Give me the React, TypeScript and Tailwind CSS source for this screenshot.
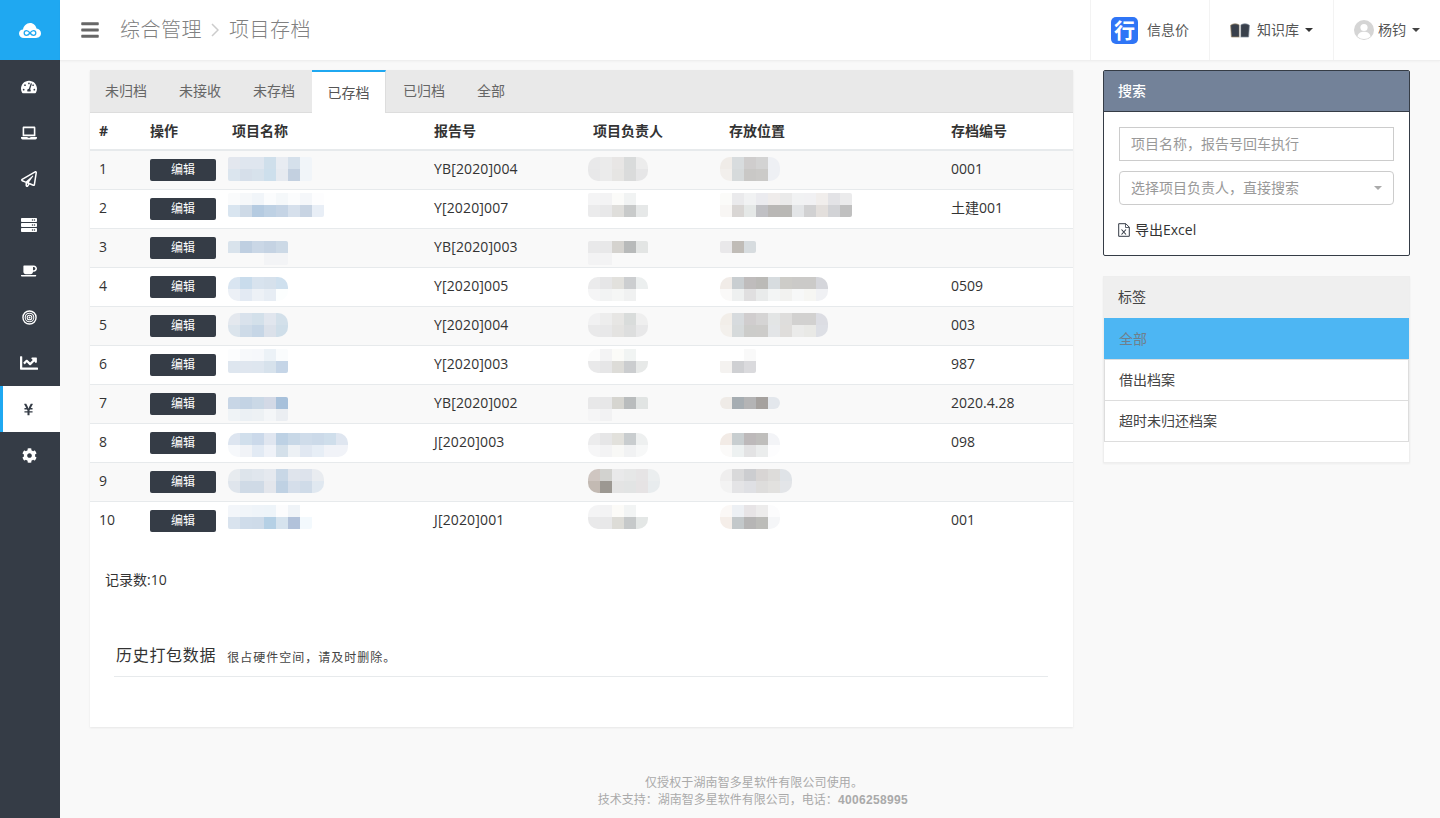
import React from "react";
import {
  FaTachometerAlt,
  FaLaptop,
  FaRegPaperPlane,
  FaServer,
  FaCoffee,
  FaChartLine,
  FaYenSign,
  FaCog,
  FaBars,
} from "react-icons/fa";

const FONT = "font-['Open_Sans','Noto_Sans_CJK_SC',sans-serif]";

type M = string[];

function Mosaic({ rows, top, round, className }: { rows: M; top: number; round: boolean; className: string }) {
  return (
    <div
      className={`w-fit overflow-hidden ${round ? "rounded-[10px]" : "rounded-[2px]"} ${className}`}
      style={{ marginTop: top }}
    >
      {rows.map((r, i) => (
        <div key={i} className="flex">
          {r.split(" ").map((c, j) => (
            <div key={j} className="h-3 w-3" style={{ background: `#${c}` }} />
          ))}
        </div>
      ))}
    </div>
  );
}

const data: { report: string; code: string; name: M; person: M; loc: M; round: string }[] = [
  {
    report: "YB[2020]004",
    code: "0001",
    round: "pl",
    name: ["e3e7ee dfe6ef dfe6ef cfdfeb e8ecf2 d5e0eb f1f5f9", "dbe5ee d6dfea d7e2ec cddfec e6eaf0 c3d0e0 f1f5f9"],
    person: ["e9e9ea ebebeb e8e6e5 d9dbdb ececec", "e8e8e9 ebebeb e6e5e3 dadbdb e6e6e7"],
    loc: ["f0ece8 d8dcde cfcdcd d3d3d3 eef0f4", "f2efec d6dadb c9c8c6 cbcac8 eef0f4"],
  },
  {
    report: "Y[2020]007",
    code: "土建001",
    round: "",
    name: ["fafbfc f6f8fa f1f5f9 fbfcfd f5f8fa fbfcfd f5f7fa fdfdfe", "d9e5f0 cedae7 b5cbe1 bed1e4 c5d4e5 d6e0ec c8d4e3 e8eef6"],
    person: ["f4f4f5 f3f3f4 fbfbf9 f1f3f3 ffffff", "ebebec e8e8e9 dfdedb c8caca e6e8e8"],
    loc: ["fbfbf9 eaeaec f1f2f3 ebebef efeceb eaeaea f1f2f3 f1f1f3 f1eeec e3e3e6 ebebec", "f8f6f4 d9d6d4 e5e8e7 c0c0c4 b9b7b5 b9b8b5 e3e5e7 d1d1d2 e3dfdc d2d3d6 c0c0c0"],
  },
  {
    report: "YB[2020]003",
    code: "",
    round: "",
    name: ["d9e3ec bfcfe1 cad7e6 c5d3e3 ccd9e6", "f9f9f9 f9f9f9 f9f9f9 f3f4f6 f3f4f6"],
    person: ["e9e9ea e8e8e9 d5d3cf b8baba e3e5e4", "f3f3f4 f3f3f4 f9f9f9 f9f9f9 f9f9f9"],
    loc: ["e9e8ea c0bcb7 d7dcdf"],
  },
  {
    report: "Y[2020]005",
    code: "0509",
    round: "npl",
    name: ["d9e5f1 c9dcec d8e3ee d6e1ec cfe0ee", "ecf0f6 e3eaf3 edf1f6 e7edf4 fcfefe"],
    person: ["ebebec e6e6e7 e2e1dd ccced0 ecefef", "f5f5f6 f2f3f3 f5f6f5 f0f1f1 ffffff"],
    loc: ["f1ece8 c9ced1 bfbcbc bbbab7 d7dcdf cdccc8 cbcac8 cbcac8 d5d6db", "faf9f8 eef0f0 e0dfe0 e9ebeb f3f5f5 f2f2f0 f7f8f8 f6f6f3 f0f1f4"],
  },
  {
    report: "Y[2020]004",
    code: "003",
    round: "npl",
    name: ["e4e8ee d9e2ec d3e0ea e1e6ee d3e0ea", "dbe4ec cedbe8 c6d6e6 dbe1ea cfdee9"],
    person: ["f1f1f2 ededed e7e6e4 d9dcdb efefef", "e9e9ea e8e8e9 e4e3e1 dddede e8e8e9"],
    loc: ["f2eee9 d7dbde d0cdce d5d4d4 e3e5e5 dedddc d2d1d0 d2d1d0 dcdde3", "f3f0ec d6dadb ccccca cdccca e3e5e7 dfdddb ebebea e9e9e6 dddfe5"],
  },
  {
    report: "Y[2020]003",
    code: "987",
    round: "p",
    name: ["fcfdfe f7f9fb f6f8fb ecf2f7 fafcfd", "dee6ef dfe6ef dee6ef d7e2ec c5d5e7"],
    person: ["fcfcfc f3f3f4 fbfbf8 f1f4f3 ffffff", "e9e9ea e6e6e7 dddcd8 cbcdcf e7e9e8"],
    loc: ["ffffff ffffff f9f9f9", "f4f2f0 cfd0d3 dadadd"],
  },
  {
    report: "YB[2020]002",
    code: "2020.4.28",
    round: "l",
    name: ["c8d6e6 c3d3e4 cad8e6 d3d9e6 a8c1db", "eff3f6 ebf0f4 edf1f4 f4f6f8 ebeef2"],
    person: ["e8e8e9 e7e7e8 d6d5d0 b9bcbd e1e4e3", "f5f5f6 f2f2f3 f9f9f9 f9f9f9 f9f9f9"],
    loc: ["efebe7 a6adb2 b4b4b5 a5a19e e3e7ec"],
  },
  {
    report: "J[2020]003",
    code: "098",
    round: "npl",
    name: ["dde5f0 d1dfec cbd9ea e0e6f0 bdd1e4 c8d8e7 cfdcea ccdae9 cfdeeb dfe6f0", "f6f8fb f1f3f7 e2eaf4 eff2f8 d4e0ea edf1f5 e1e8f2 e7eef6 f1f3f8 f1f3f8"],
    person: ["ececed e6e6e7 e2e1dc c9cdcf eef0f0", "f6f6f7 f3f3f4 f8f8f6 f1f2f3 f7f8f8"],
    loc: ["f2ebe6 c8ced0 bdb9ba bfbebc f3f4f7", "fbfaf9 edf1f1 e3e3e4 ebeded fdfdfe"],
  },
  {
    report: "",
    code: "",
    round: "npl",
    name: ["e7ebef dde4eb e0e6ed e5e9ef c8d7e6 dfe4ec dde3ec e9ecf0", "dfe5ec cfdae6 cfdae6 e3e6ec bfd1e3 d5deea cfdbe8 e0e8f0"],
    person: ["cfc6c1 d2d2cf e9e9ea e6e7e7 e6e4e5 ebeeef", "c3bab3 9c9892 e4e4e4 e2e4e4 e6e3e4 e8ecee"],
    loc: ["efeeee d9d9da cccdd0 d8d5d4 dddcda dfe3e7", "f3f3f3 e4e4e6 dfe0e4 dedddc e2e1df e3e5e8"],
  },
  {
    report: "J[2020]001",
    code: "001",
    round: "pl",
    name: ["f3f6fa f1f5f9 eff4f9 eef4f9 fcfcfd f0f4f8 ffffff", "d9e3ee cfdcea cedbe9 b5d0e5 d6e3ee b2c2da f3f9fd"],
    person: ["f4f4f5 f3f3f4 fcfbf8 f2f4f4 ffffff", "e9e9ea e8e8e9 dddcd7 c6c9ca e4e7e6"],
    loc: ["fbf8f6 edf0f4 e7e4e6 edecec fcfcfd", "f5eee9 c3c8ca b6b5b5 bcbcb9 f5f6f8"],
  },
];

const offsets = [6, 3, 12, 9, 6, 3, 12, 9, 6, 3];

function Rings({ size }: { size?: number }) {
  return (
    <svg width={size} height={size} viewBox="0 0 16 16" fill="none" stroke="currentColor">
      <circle cx="8" cy="8" r="7" strokeWidth="1.500" />
      <circle cx="8" cy="8" r="4.600" strokeWidth="1.100" />
      <circle cx="8" cy="8" r="2.500" strokeWidth="1.100" />
      <circle cx="8" cy="8" r="0.800" fill="currentColor" strokeWidth="0.500" />
    </svg>
  );
}

const nav: { Icon: React.ComponentType<{ size?: number }>; active?: boolean; size?: number }[] = [
  { Icon: FaTachometerAlt },
  { Icon: FaLaptop },
  { Icon: FaRegPaperPlane },
  { Icon: FaServer },
  { Icon: FaCoffee },
  { Icon: Rings, size: 15 },
  { Icon: FaChartLine, size: 18 },
  { Icon: FaYenSign, active: true, size: 13 },
  { Icon: FaCog, size: 15 },
];

const tabs = ["未归档", "未接收", "未存档", "已存档", "已归档", "全部"];

function Caret({ className = "border-t-[#333]" }: { className?: string }) {
  return <span className={`inline-block h-0 w-0 border-x-4 border-t-4 border-x-transparent ${className}`} />;
}

function Logo() {
  return (
    <svg width="22" height="15" viewBox="0 0 22 15">
      <path
        d="M5 15C2 15 0 13 0 10.500 0 8 2 6.500 4 6.500 4.500 3 7.500 0 11 0c3.500 0 6 2.500 6.500 5.500C20 5.700 22 7.700 22 10.300 22 13 20 15 17 15Z"
        fill="#fff"
      />
      <path
        d="M11 10C9.500 8 8.500 7.700 7.500 7.700a2.300 2.300 0 0 0 0 4.600C8.500 12.300 9.500 12 11 10c1.500-2 2.500-2.300 3.500-2.300a2.300 2.300 0 0 1 0 4.600C13.500 12.300 12.500 12 11 10Z"
        fill="none"
        stroke="#1fa8f1"
        strokeWidth="1.300"
      />
    </svg>
  );
}

function Book() {
  return (
    <svg width="20" height="15" viewBox="0 0 20 15">
      <path d="M0.600 2.200 L1.400 14 L9.300 14 L9.300 2 C6.500 0.400 3.500 0.400 0.600 2.200Z" fill="#39404b" stroke="#a08d6c" strokeWidth="0.700" />
      <path d="M19.400 2.200 L18.600 14 L10.700 14 L10.700 2 C13.500 0.400 16.500 0.400 19.400 2.200Z" fill="#39404b" stroke="#7d8a99" strokeWidth="0.700" />
      <rect x="9.300" y="2" width="1.400" height="12.500" fill="#d8d8d8" />
    </svg>
  );
}

function Avatar() {
  return (
    <svg width="20" height="20" viewBox="0 0 20 20">
      <circle cx="10" cy="10" r="10" fill="#d5d5d5" />
      <circle cx="10" cy="7.500" r="3.600" fill="#fff" />
      <path d="M3.500 16.500C4 13 7 11.800 10 11.800s6 1.200 6.500 4.700A9.500 9.500 0 0 1 3.500 16.500Z" fill="#fff" />
    </svg>
  );
}

function ExcelFile() {
  return (
    <svg width="12" height="14" viewBox="0 0 12 14" fill="none" stroke="#343b46">
      <path d="M0.700 0.700H7.800L11.300 4.200V13.300H0.700Z" strokeWidth="1" />
      <path d="M7.500 0.700V4.500H11.300" strokeWidth="0.800" />
      <path d="M3.500 6.500L8 11.500M8 6.500L3.500 11.500" strokeWidth="1.100" />
    </svg>
  );
}

export default function App() {
  return (
    <div className={`${FONT} flex h-[818px] w-[1440px] overflow-hidden bg-[#f9f9f9] text-[14px] text-[#333]`}>
      <aside className="flex w-[60px] shrink-0 flex-col bg-[#353c46]">
        <div className="flex h-[60px] items-center justify-center bg-[#1fa8f1]">
          <Logo />
        </div>
        <nav className="mt-1 flex flex-col">
          {nav.map(({ Icon, active, size }, i) => (
            <div
              key={i}
              className={`flex h-[46px] items-center justify-center ${
                active ? "border-l-[3px] border-[#1fa8f1] bg-white pr-[6px] text-[#353c46]" : "pr-[2px] text-white"
              }`}
            >
              <Icon size={size ?? 16} />
            </div>
          ))}
        </nav>
      </aside>

      <div className="flex min-w-0 flex-1 flex-col">
        <header className="flex h-[61px] shrink-0 items-stretch justify-between border-b border-[#efefef] bg-white shadow-[0_1px_2px_rgba(0,0,0,0.03)]">
          <div className="flex items-center pl-5">
            <FaBars size={20} className="text-[#666]" />
            <div className="ml-5 flex items-center text-[20px] font-light tracking-[0.5px] text-[#808080]">
              <span>综合管理</span>
              <svg width="8" height="14" viewBox="0 0 8 14" className="ml-[9px] mr-[10px]">
                <path d="M1 1l6 6-6 6" fill="none" stroke="#ccc" strokeWidth="1.500" />
              </svg>
              <span>项目存档</span>
            </div>
          </div>
          <div className="flex items-stretch text-[14px] text-[#555]">
            <div className="flex w-[119px] items-center border-l border-[#f3f3f3] pl-5">
              <span className="flex h-[27px] w-[27px] items-center justify-center rounded-[5px] bg-[#2f75f6] text-[21px] font-bold leading-none text-white">
                行
              </span>
              <span className="ml-[9px] pb-[2px]">信息价</span>
            </div>
            <div className="flex w-[124px] items-center border-l border-[#f3f3f3] pl-5">
              <Book />
              <span className="ml-[7px] pb-[2px]">知识库</span>
              <Caret className="ml-[6px] border-t-[#333]" />
            </div>
            <div className="flex w-[107px] items-center border-l border-[#f3f3f3] pl-5">
              <Avatar />
              <span className="ml-[4px] pb-[2px]">杨钧</span>
              <Caret className="ml-[6px] border-t-[#444]" />
            </div>
          </div>
        </header>

        <div className="flex items-start pl-[30px] pt-[9px]">
          <main className="h-[657px] w-[983px] shrink-0 bg-white shadow-[0_1px_2px_rgba(0,0,0,0.08)]">
            <div className="flex h-[43px] border-b border-[#ddd] bg-[#e9e9e9]">
              {tabs.map((t, i) =>
                t === "已存档" ? (
                  <div
                    key={t}
                    className="z-10 ml-px flex h-[43px] w-[74px] items-center justify-center border-r border-t-2 border-r-[#ddd] border-t-[#1fa8f1] bg-white text-[#555]"
                  >
                    {t}
                  </div>
                ) : (
                  <div
                    key={t}
                    className={`flex h-[40px] items-center justify-center px-4 text-[#666] ${i === 0 ? "-ml-px" : ""} ${
                      i === 4 ? "ml-px" : ""
                    }`}
                  >
                    {t}
                  </div>
                )
              )}
            </div>

            <table className="w-[983px] table-fixed border-collapse">
              <colgroup>
                <col className="w-[52px]" />
                <col className="w-[82px]" />
                <col className="w-[202px]" />
                <col className="w-[159px]" />
                <col className="w-[136px]" />
                <col className="w-[222px]" />
                <col className="w-[130px]" />
              </colgroup>
              <thead>
                <tr className="h-[37px] border-b-2 border-[#e7eaec] text-left text-[#333]">
                  <th className="pb-[2px] pl-[9px] font-bold">#</th>
                  <th className="pb-[2px] pl-2 font-bold">操作</th>
                  <th className="pb-[2px] pl-2 font-bold">项目名称</th>
                  <th className="pb-[2px] pl-2 font-bold">报告号</th>
                  <th className="pb-[2px] pl-2 font-bold">项目负责人</th>
                  <th className="pb-[2px] pl-2 font-bold">存放位置</th>
                  <th className="pb-[2px] pl-2 font-bold">存档编号</th>
                </tr>
              </thead>
              <tbody>
                {data.map((r, i) => (
                  <tr key={i} className={`h-[39px] border-b border-[#e7eaec] last:border-b-0 ${i % 2 === 0 ? "bg-[#f9f9f9]" : "bg-white"}`}>
                    <td className="pb-[2px] pl-[9px]">{i + 1}</td>
                    <td className="pl-2">
                      <div className="flex h-[22px] w-[66px] items-center justify-center rounded-[2px] bg-[#353c46] text-[12px] text-white">
                        编辑
                      </div>
                    </td>
                    <td className="p-0 align-top">
                      <Mosaic rows={r.name} top={offsets[i]} round={r.round.includes("n")} className="ml-1" />
                    </td>
                    <td className="pb-[2px] pl-2 tracking-[0.15px]">{r.report}</td>
                    <td className="p-0 align-top">
                      <Mosaic rows={r.person} top={offsets[i]} round={r.round.includes("p")} className="ml-[3px]" />
                    </td>
                    <td className="p-0 align-top">
                      <Mosaic rows={r.loc} top={offsets[i]} round={r.round.includes("l")} className="-ml-px" />
                    </td>
                    <td className="pb-[2px] pl-2">{r.code}</td>
                  </tr>
                ))}
              </tbody>
            </table>

            <p className="ml-[15px] mt-[30px] leading-5">记录数:10</p>

            <div className="ml-6 mt-[53px] flex w-[934px] items-baseline border-b border-[#e7eaec] pb-[9px] pl-[2px]">
              <h3 className="text-[16px] tracking-[0.7px] text-[#333]">历史打包数据</h3>
              <span className="relative top-px ml-[11px] text-[12px] tracking-[1px] text-[#444]">很占硬件空间，请及时删除。</span>
            </div>
          </main>

          <div className="ml-[30px] flex w-[307px] shrink-0 flex-col gap-5">
            <section className="h-[186px] rounded-[2px] border border-[#353c46] bg-white">
              <div className="flex h-[41px] items-center border-b border-[#353c46] bg-[#738299] pb-[2px] pl-[14px] font-medium text-white">
                搜索
              </div>
              <div className="flex flex-col px-[15px] pt-[15px]">
                <input
                  readOnly
                  placeholder="项目名称，报告号回车执行"
                  className="h-[34px] w-full border border-[#ccc] bg-white pb-[2px] pl-[11px] pr-3 text-[14px] outline-none placeholder:text-[#999]"
                />
                <div className="mt-[10px] flex h-[34px] items-center justify-between rounded-[4px] border border-[#ccc] pb-[2px] pl-[11px] pr-[11px] text-[#999]">
                  <span>选择项目负责人，直接搜索</span>
                  <Caret className="mt-[2px] border-t-[#aaa]" />
                </div>
                <div className="-ml-px mt-[14px] flex items-center text-[#333]">
                  <ExcelFile />
                  <span className="ml-[5px]">导出Excel</span>
                </div>
              </div>
            </section>

            <section className="h-[187px] border border-[#eee] bg-white shadow-[0_1px_2px_rgba(0,0,0,0.05)]">
              <div className="flex h-[41px] items-center bg-[#efefef] pb-[2px] pl-[14px] text-[#444]">标签</div>
              <div className="flex h-[41px] items-center bg-[#4db6f3] pl-[15px] text-[#6f7f8c]">全部</div>
              <div className="flex h-[41px] items-center border-x border-t border-[#ddd] pb-[2px] pl-[14px] text-[#444]">借出档案</div>
              <div className="flex h-[42px] items-center border-x border-y border-[#ddd] pb-[2px] pl-[14px] text-[#444]">超时未归还档案</div>
            </section>
          </div>
        </div>

        <footer className="mt-[47px] flex flex-col items-center pl-[6px] text-[12px] leading-[17px] text-[#aaa]">
          <p className="ml-[2px] tracking-[0.12px]">仅授权于湖南智多星软件有限公司使用。</p>
          <p>
            技术支持：湖南智多星软件有限公司，电话：
            <span className="font-['Liberation_Sans',sans-serif] font-bold tracking-[0.35px]">4006258995</span>
          </p>
        </footer>
      </div>
    </div>
  );
}
